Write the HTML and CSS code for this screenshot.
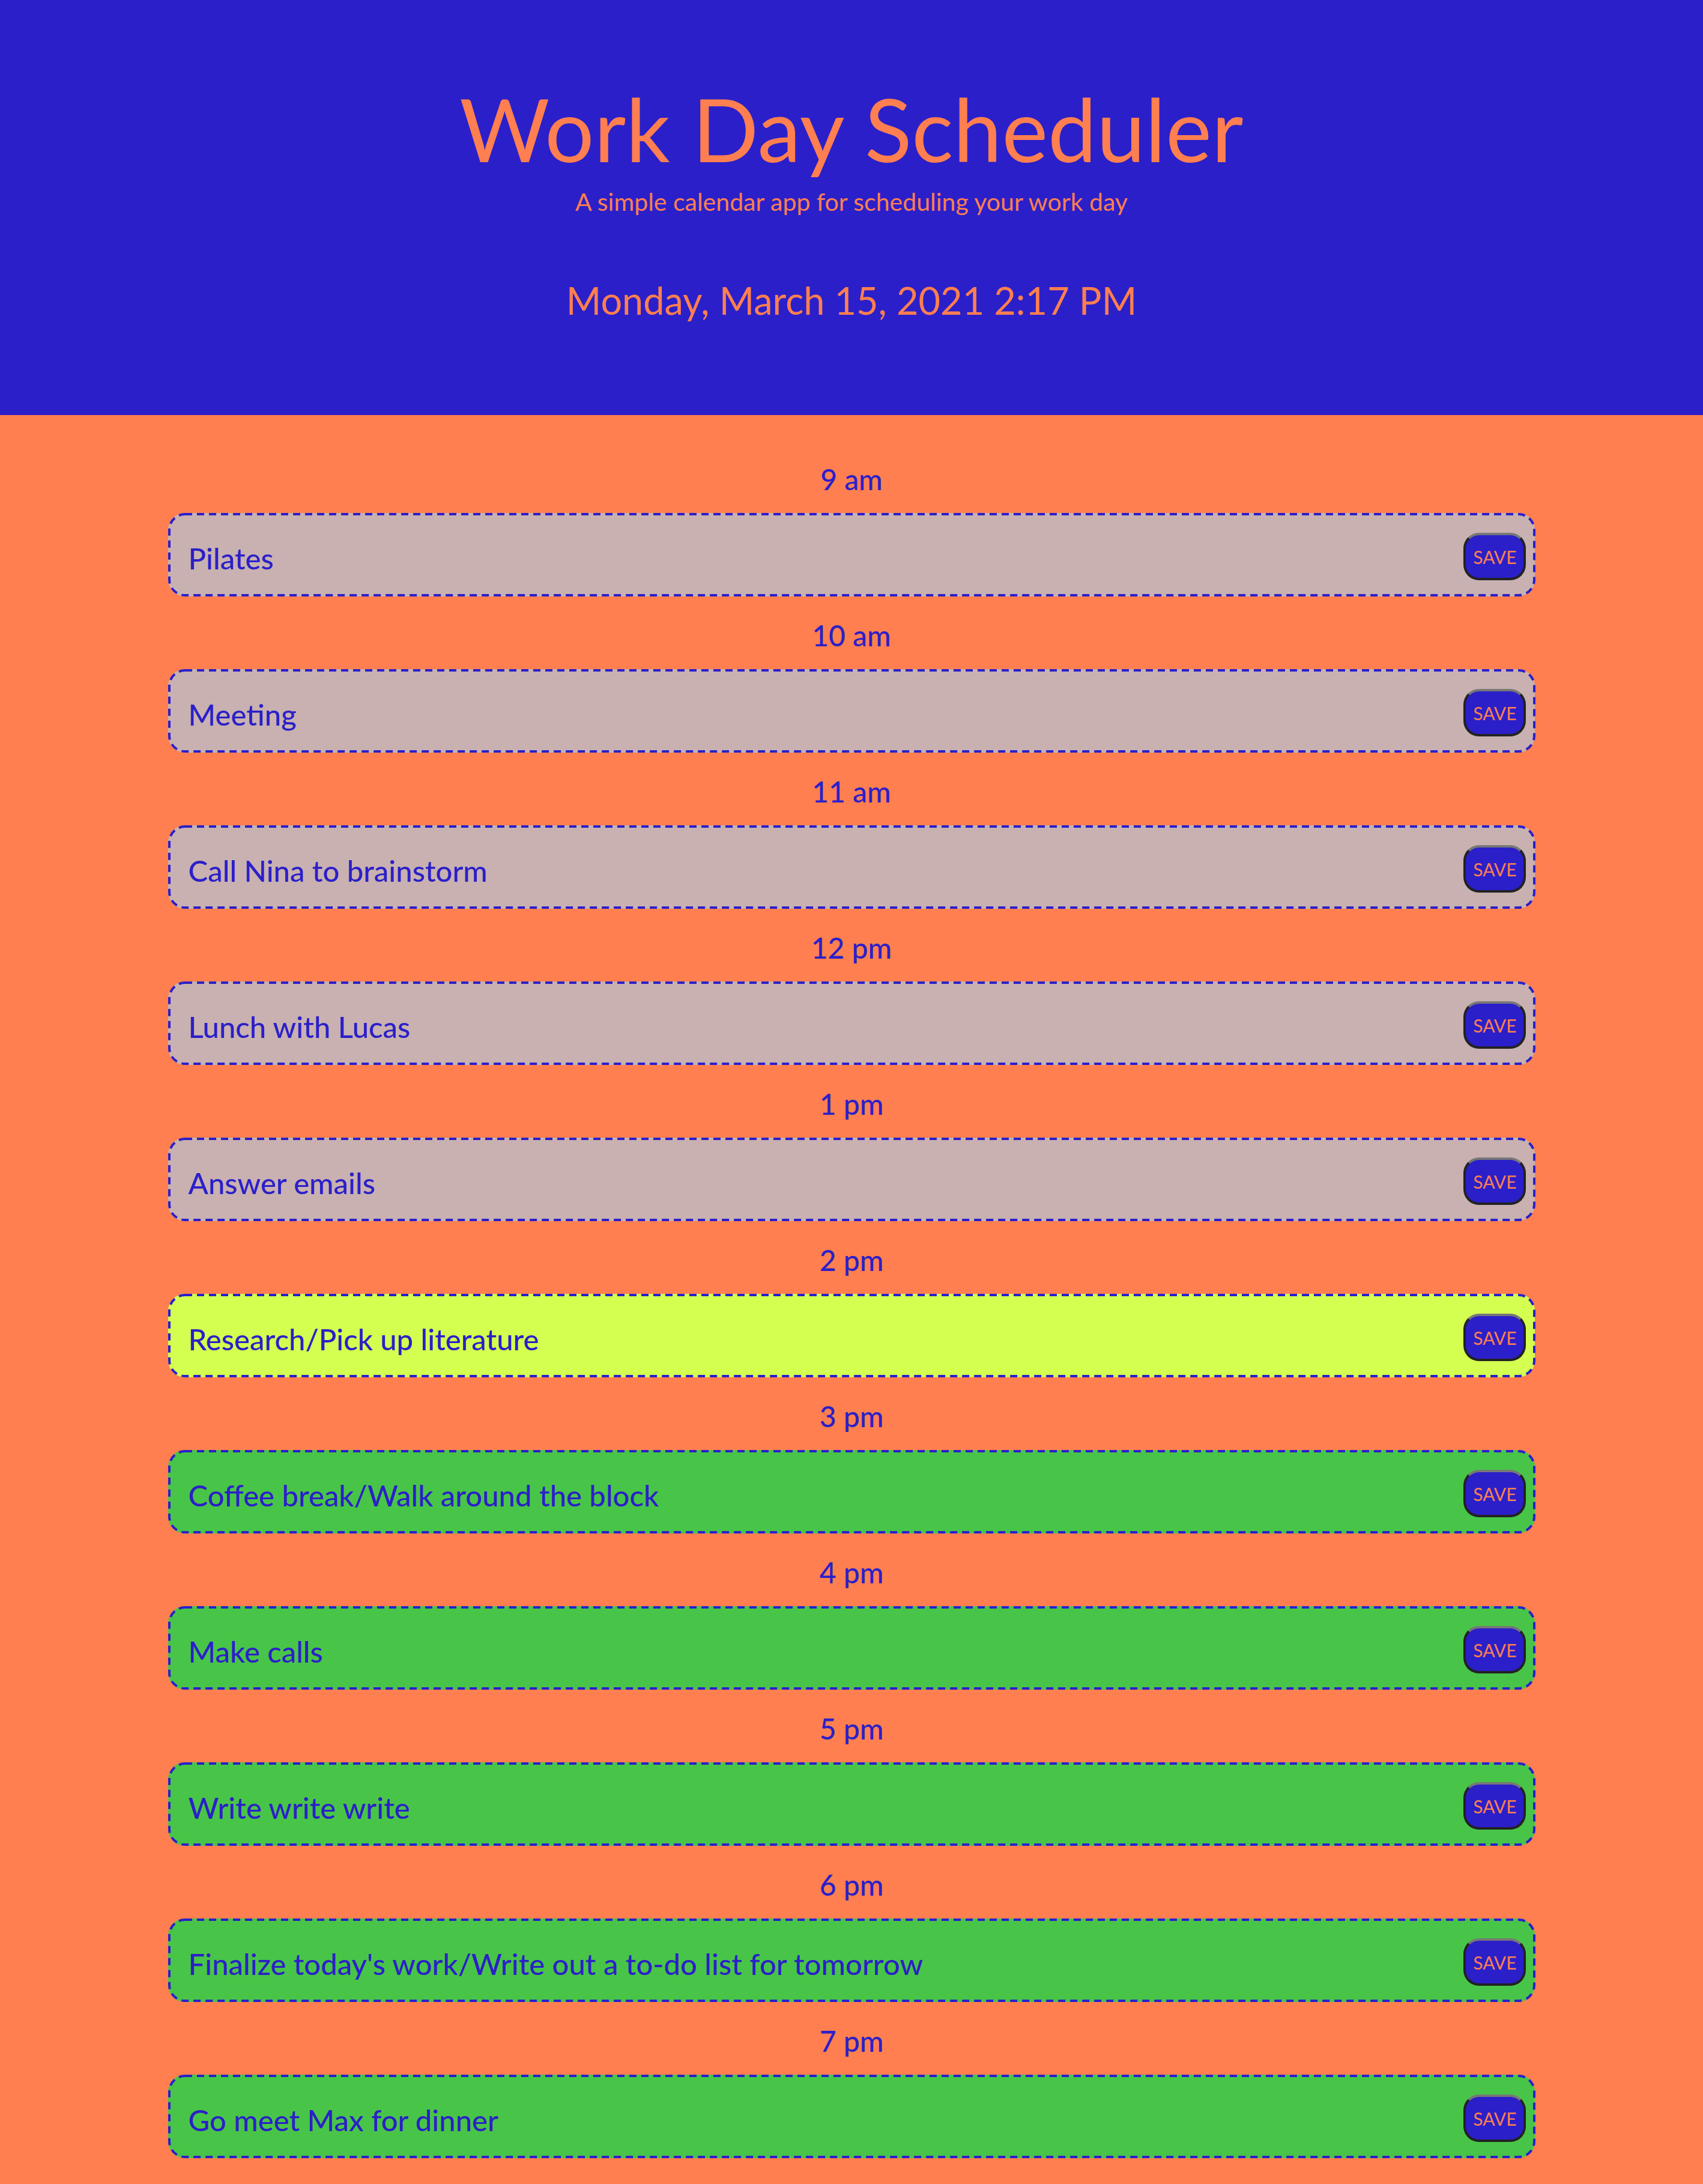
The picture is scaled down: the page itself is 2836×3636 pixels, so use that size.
FILE: index.html
```html
<!DOCTYPE html>
<html lang="en">
<head>
<meta charset="utf-8">
<title>Work Day Scheduler</title>
<link rel="stylesheet" href="styles.css">
</head>
<body>
<header class="jumbotron">
  <h1 class="title">Work Day Scheduler</h1>
  <p class="lead">A simple calendar app for scheduling your work day</p>
  <p class="current-day">Monday, March 15, 2021 2:17 PM</p>
</header>
<main class="container">
  <section class="time-block">
    <div class="hour">9 am</div>
    <div class="row past"><svg class="dash" aria-hidden="true"><rect x="2" y="2" width="2273" height="135" rx="26" ry="26"/></svg><span class="description">Pilates</span><button class="save-btn">SAVE</button></div>
  </section>
  <section class="time-block">
    <div class="hour">10 am</div>
    <div class="row past"><svg class="dash" aria-hidden="true"><rect x="2" y="2" width="2273" height="135" rx="26" ry="26"/></svg><span class="description">Meeting</span><button class="save-btn">SAVE</button></div>
  </section>
  <section class="time-block">
    <div class="hour">11 am</div>
    <div class="row past"><svg class="dash" aria-hidden="true"><rect x="2" y="2" width="2273" height="135" rx="26" ry="26"/></svg><span class="description">Call Nina to brainstorm</span><button class="save-btn">SAVE</button></div>
  </section>
  <section class="time-block">
    <div class="hour">12 pm</div>
    <div class="row past"><svg class="dash" aria-hidden="true"><rect x="2" y="2" width="2273" height="135" rx="26" ry="26"/></svg><span class="description">Lunch with Lucas</span><button class="save-btn">SAVE</button></div>
  </section>
  <section class="time-block">
    <div class="hour">1 pm</div>
    <div class="row past"><svg class="dash" aria-hidden="true"><rect x="2" y="2" width="2273" height="135" rx="26" ry="26"/></svg><span class="description">Answer emails</span><button class="save-btn">SAVE</button></div>
  </section>
  <section class="time-block">
    <div class="hour">2 pm</div>
    <div class="row present"><svg class="dash" aria-hidden="true"><rect x="2" y="2" width="2273" height="135" rx="26" ry="26"/></svg><span class="description">Research/Pick up literature</span><button class="save-btn">SAVE</button></div>
  </section>
  <section class="time-block">
    <div class="hour">3 pm</div>
    <div class="row future"><svg class="dash" aria-hidden="true"><rect x="2" y="2" width="2273" height="135" rx="26" ry="26"/></svg><span class="description">Coffee break/Walk around the block</span><button class="save-btn">SAVE</button></div>
  </section>
  <section class="time-block">
    <div class="hour">4 pm</div>
    <div class="row future"><svg class="dash" aria-hidden="true"><rect x="2" y="2" width="2273" height="135" rx="26" ry="26"/></svg><span class="description">Make calls</span><button class="save-btn">SAVE</button></div>
  </section>
  <section class="time-block">
    <div class="hour">5 pm</div>
    <div class="row future"><svg class="dash" aria-hidden="true"><rect x="2" y="2" width="2273" height="135" rx="26" ry="26"/></svg><span class="description">Write write write</span><button class="save-btn">SAVE</button></div>
  </section>
  <section class="time-block">
    <div class="hour">6 pm</div>
    <div class="row future"><svg class="dash" aria-hidden="true"><rect x="2" y="2" width="2273" height="135" rx="26" ry="26"/></svg><span class="description">Finalize today's work/Write out a to-do list for tomorrow</span><button class="save-btn">SAVE</button></div>
  </section>
  <section class="time-block">
    <div class="hour">7 pm</div>
    <div class="row future"><svg class="dash" aria-hidden="true"><rect x="2" y="2" width="2273" height="135" rx="26" ry="26"/></svg><span class="description">Go meet Max for dinner</span><button class="save-btn">SAVE</button></div>
  </section>
</main>
</body>
</html>
```
FILE: styles.css
```css
html, body {
  margin: 0;
  padding: 0;
}
body {
  background: #ff7f50;
  font-family: Lato, "Open Sans", sans-serif;
  color: #2b1fc9;
}
.jumbotron {
  background: #2b1fc9;
  color: #ff7f50;
  text-align: center;
  padding: 130px 0 0;
  height: 691px;
  box-sizing: border-box;
}
.title {
  margin: 0;
  font-size: 145px;
  line-height: 168px;
  font-weight: 400;
}
.lead {
  margin: 15px 0 0;
  font-size: 41px;
  line-height: 46px;
}
.current-day {
  margin: 101px 0 0;
  font-size: 63px;
  line-height: 79px;
}
.container {
  width: calc(80% + 8px);
  margin: 0 auto;
  padding-top: 42px;
}
.hour {
  text-align: center;
  font-size: 48px;
  line-height: 58px;
  font-weight: 500;
  padding: 36px 0 27px;
}
.row {
  position: relative;
  height: 139px;
  box-sizing: border-box;
  border: 4px solid transparent;
  border-radius: 28px;
  padding: 6px 11px 0 30px;
  display: flex;
  align-items: center;
  justify-content: space-between;
  font-size: 49px;
  font-weight: 500;
}
.description {
  padding-top: 4px;
}
.dash {
  position: absolute;
  left: -4px;
  top: -4px;
  width: calc(100% + 8px);
  height: calc(100% + 8px);
  overflow: visible;
  pointer-events: none;
}
.dash rect {
  fill: none;
  stroke: #2b1fc9;
  stroke-width: 4;
  stroke-dasharray: 12 8;
}
.past { background: #c8b1b0; }
.present { background: #d4ff50; }
.future { background: #48c548; }
.save-btn {
  width: 104px;
  height: 79px;
  box-sizing: border-box;
  background: #2b1fc9;
  color: #ff7f50;
  font-family: Lato, "Open Sans", sans-serif;
  font-size: 30px;
  border: 4px solid #222;
  border-top-color: #777;
  border-radius: 26px;
  padding: 0;
}
```
